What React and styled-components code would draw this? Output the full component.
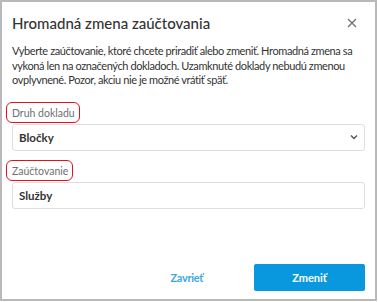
import React, { useState } from "react";
import styled, { createGlobalStyle } from "styled-components";

const GlobalStyle = createGlobalStyle`
  html, body {
    margin: 0;
    padding: 0;
    background: #ffffff;
  }
  body {
    font-family: "Lato", "Open Sans", sans-serif;
    color: #333333;
  }
`;

const Dialog = styled.div`
  box-sizing: border-box;
  width: 377px;
  height: 301px;
  border: 2px solid #b9b9b9;
  background: #ffffff;
  display: flex;
  flex-direction: column;
  padding: 0 10px 0 10px;
`;

const Header = styled.div`
  display: flex;
  align-items: center;
  justify-content: space-between;
  height: 42px;
`;

const Title = styled.h2`
  margin: 0;
  font-size: 15px;
  font-weight: 500;
  color: #333333;
`;

const CloseButton = styled.button`
  border: none;
  background: none;
  padding: 0;
  width: 14px;
  height: 14px;
  margin-right: 6px;
  display: flex;
  align-items: center;
  justify-content: center;
  cursor: pointer;
`;

const Intro = styled.p`
  margin: 0;
  font-size: 11px;
  letter-spacing: -0.4px;
  line-height: 14.5px;
  color: #333333;
  white-space: nowrap;
`;

const Field = styled.div`
  display: flex;
  flex-direction: column;
  margin-top: ${(p) => p.$top}px;
`;

const Label = styled.label`
  position: relative;
  align-self: flex-start;
  font-size: 10.5px;
  color: #6f6f6f;
  margin-bottom: 5px;

  &::after {
    content: "";
    position: absolute;
    left: -6px;
    right: -5px;
    top: -5px;
    bottom: -4px;
    border: 1.5px solid #e0141e;
    border-radius: 6px;
  }
`;

const SelectBox = styled.div`
  box-sizing: border-box;
  height: 27px;
  border: 1px solid #dedede;
  border-radius: 3px;
  display: flex;
  align-items: center;
  justify-content: space-between;
  padding: 0 6px 0 6px;
  font-size: 11.5px;
  font-weight: 700;
  color: #333333;
`;

const TextInput = styled.input`
  box-sizing: border-box;
  height: 27px;
  border: 1px solid #dedede;
  border-radius: 3px;
  padding: 0 6px;
  font-family: inherit;
  font-size: 11.5px;
  font-weight: 700;
  color: #333333;
  outline: none;
`;

const Footer = styled.div`
  margin-top: auto;
  margin-bottom: 8px;
  display: flex;
  justify-content: flex-end;
  align-items: center;
  gap: 51px;
`;

const LinkButton = styled.button`
  border: none;
  background: none;
  padding: 0;
  font-family: inherit;
  font-size: 11px;
  font-weight: 700;
  letter-spacing: -0.3px;
  color: #41a8e0;
  cursor: pointer;
`;

const PrimaryButton = styled.button`
  width: 111px;
  height: 27px;
  border: none;
  border-radius: 2px;
  background: #0997dd;
  color: #ffffff;
  font-family: inherit;
  font-size: 11px;
  font-weight: 700;
  cursor: pointer;
`;

const Chevron = () => (
  <svg width="8" height="6" viewBox="0 0 8 6">
    <path d="M1 1.5 L4 4.5 L7 1.5" fill="none" stroke="#555" strokeWidth="1.4" />
  </svg>
);

const CloseIcon = () => (
  <svg width="10" height="10" viewBox="0 0 10 10">
    <path d="M1 1 L9 9 M9 1 L1 9" stroke="#707070" strokeWidth="1.3" />
  </svg>
);

export default function App() {
  const [account, setAccount] = useState("Služby");

  return (
    <>
      <GlobalStyle />
      <Dialog>
        <Header>
          <Title>Hromadná zmena zaúčtovania</Title>
          <CloseButton aria-label="Zavrieť">
            <CloseIcon />
          </CloseButton>
        </Header>
        <Intro>
          Vyberte zaúčtovanie, ktoré chcete priradiť alebo zmeniť. Hromadná zmena sa
          <br />
          vykoná len na označených dokladoch. Uzamknuté doklady nebudú zmenou
          <br />
          ovplyvnené. Pozor, akciu nie je možné vrátiť späť.
        </Intro>
        <Field $top={19}>
          <Label>Druh dokladu</Label>
          <SelectBox>
            <span>Bločky</span>
            <Chevron />
          </SelectBox>
        </Field>
        <Field $top={14}>
          <Label>Zaúčtovanie</Label>
          <TextInput value={account} onChange={(e) => setAccount(e.target.value)} />
        </Field>
        <Footer>
          <LinkButton>Zavrieť</LinkButton>
          <PrimaryButton>Zmeniť</PrimaryButton>
        </Footer>
      </Dialog>
    </>
  );
}
